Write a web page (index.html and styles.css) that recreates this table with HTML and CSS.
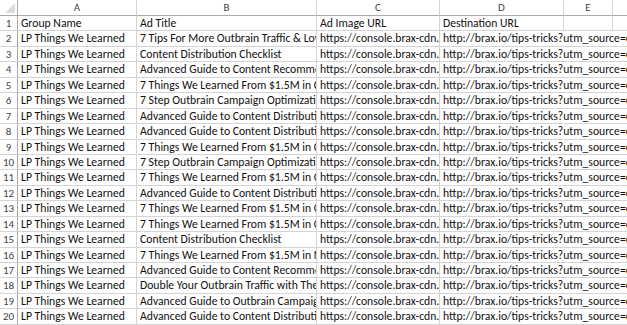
FILE: index.html
```html
<!DOCTYPE html>
<html>
<head>
<meta charset="utf-8">
<link rel="stylesheet" href="styles.css">
</head>
<body>
<div class="sheet">
  <div class="corner"><span class="tri"></span></div>
  <div class="colhead">A</div>
  <div class="colhead">B</div>
  <div class="colhead">C</div>
  <div class="colhead">D</div>
  <div class="colhead">E</div>
  <div class="colhead last"></div>

  <div class="rowhead">1</div>
  <div class="cell">Group Name</div>
  <div class="cell">Ad Title</div>
  <div class="cell">Ad Image URL</div>
  <div class="cell">Destination URL</div>
  <div class="cell"></div>
  <div class="cell last"></div>

  <div class="rowhead">2</div>
  <div class="cell">LP Things We Learned</div>
  <div class="cell">7 Tips For More Outbrain Traffic &amp; Lower CPCs</div>
  <div class="cell">https://console.brax-cdn.com/creatives/1.jpg</div>
  <div class="cell wide">http://brax.io/tips-tricks?utm_source=outbrain&amp;utm_medium=cpc</div>

  <div class="rowhead">3</div>
  <div class="cell">LP Things We Learned</div>
  <div class="cell">Content Distribution Checklist</div>
  <div class="cell">https://console.brax-cdn.com/creatives/2.jpg</div>
  <div class="cell wide">http://brax.io/tips-tricks?utm_source=outbrain&amp;utm_medium=cpc</div>

  <div class="rowhead">4</div>
  <div class="cell">LP Things We Learned</div>
  <div class="cell">Advanced Guide to Content Recommendation</div>
  <div class="cell">https://console.brax-cdn.com/creatives/3.jpg</div>
  <div class="cell wide">http://brax.io/tips-tricks?utm_source=outbrain&amp;utm_medium=cpc</div>

  <div class="rowhead">5</div>
  <div class="cell">LP Things We Learned</div>
  <div class="cell">7 Things We Learned From $1.5M in Content Marketing</div>
  <div class="cell">https://console.brax-cdn.com/creatives/4.jpg</div>
  <div class="cell wide">http://brax.io/tips-tricks?utm_source=outbrain&amp;utm_medium=cpc</div>

  <div class="rowhead">6</div>
  <div class="cell">LP Things We Learned</div>
  <div class="cell">7 Step Outbrain Campaign Optimization</div>
  <div class="cell">https://console.brax-cdn.com/creatives/5.jpg</div>
  <div class="cell wide">http://brax.io/tips-tricks?utm_source=outbrain&amp;utm_medium=cpc</div>

  <div class="rowhead">7</div>
  <div class="cell">LP Things We Learned</div>
  <div class="cell">Advanced Guide to Content Distribution</div>
  <div class="cell">https://console.brax-cdn.com/creatives/6.jpg</div>
  <div class="cell wide">http://brax.io/tips-tricks?utm_source=outbrain&amp;utm_medium=cpc</div>

  <div class="rowhead">8</div>
  <div class="cell">LP Things We Learned</div>
  <div class="cell">Advanced Guide to Content Distribution</div>
  <div class="cell">https://console.brax-cdn.com/creatives/7.jpg</div>
  <div class="cell wide">http://brax.io/tips-tricks?utm_source=outbrain&amp;utm_medium=cpc</div>

  <div class="rowhead">9</div>
  <div class="cell">LP Things We Learned</div>
  <div class="cell">7 Things We Learned From $1.5M in Content Marketing</div>
  <div class="cell">https://console.brax-cdn.com/creatives/8.jpg</div>
  <div class="cell wide">http://brax.io/tips-tricks?utm_source=outbrain&amp;utm_medium=cpc</div>

  <div class="rowhead">10</div>
  <div class="cell">LP Things We Learned</div>
  <div class="cell">7 Step Outbrain Campaign Optimization</div>
  <div class="cell">https://console.brax-cdn.com/creatives/9.jpg</div>
  <div class="cell wide">http://brax.io/tips-tricks?utm_source=outbrain&amp;utm_medium=cpc</div>

  <div class="rowhead">11</div>
  <div class="cell">LP Things We Learned</div>
  <div class="cell">7 Things We Learned From $1.5M in Outbrain Ads</div>
  <div class="cell">https://console.brax-cdn.com/creatives/10.jpg</div>
  <div class="cell wide">http://brax.io/tips-tricks?utm_source=outbrain&amp;utm_medium=cpc</div>

  <div class="rowhead">12</div>
  <div class="cell">LP Things We Learned</div>
  <div class="cell">Advanced Guide to Content Distribution</div>
  <div class="cell">https://console.brax-cdn.com/creatives/11.jpg</div>
  <div class="cell wide">http://brax.io/tips-tricks?utm_source=outbrain&amp;utm_medium=cpc</div>

  <div class="rowhead">13</div>
  <div class="cell">LP Things We Learned</div>
  <div class="cell">7 Things We Learned From $1.5M in Outbrain Ads</div>
  <div class="cell">https://console.brax-cdn.com/creatives/12.jpg</div>
  <div class="cell wide">http://brax.io/tips-tricks?utm_source=outbrain&amp;utm_medium=cpc</div>

  <div class="rowhead">14</div>
  <div class="cell">LP Things We Learned</div>
  <div class="cell">7 Things We Learned From $1.5M in Outbrain Ads</div>
  <div class="cell">https://console.brax-cdn.com/creatives/13.jpg</div>
  <div class="cell wide">http://brax.io/tips-tricks?utm_source=outbrain&amp;utm_medium=cpc</div>

  <div class="rowhead">15</div>
  <div class="cell">LP Things We Learned</div>
  <div class="cell">Content Distribution Checklist</div>
  <div class="cell">https://console.brax-cdn.com/creatives/14.jpg</div>
  <div class="cell wide">http://brax.io/tips-tricks?utm_source=outbrain&amp;utm_medium=cpc</div>

  <div class="rowhead">16</div>
  <div class="cell">LP Things We Learned</div>
  <div class="cell">7 Things We Learned From $1.5M in Native Ads</div>
  <div class="cell">https://console.brax-cdn.com/creatives/15.jpg</div>
  <div class="cell wide">http://brax.io/tips-tricks?utm_source=outbrain&amp;utm_medium=cpc</div>

  <div class="rowhead">17</div>
  <div class="cell">LP Things We Learned</div>
  <div class="cell">Advanced Guide to Content Recommendation</div>
  <div class="cell">https://console.brax-cdn.com/creatives/16.jpg</div>
  <div class="cell wide">http://brax.io/tips-tricks?utm_source=outbrain&amp;utm_medium=cpc</div>

  <div class="rowhead">18</div>
  <div class="cell">LP Things We Learned</div>
  <div class="cell">Double Your Outbrain Traffic with These Tips</div>
  <div class="cell">https://console.brax-cdn.com/creatives/17.jpg</div>
  <div class="cell wide">http://brax.io/tips-tricks?utm_source=outbrain&amp;utm_medium=cpc</div>

  <div class="rowhead">19</div>
  <div class="cell">LP Things We Learned</div>
  <div class="cell">Advanced Guide to Outbrain Campaigns</div>
  <div class="cell">https://console.brax-cdn.com/creatives/18.jpg</div>
  <div class="cell wide">http://brax.io/tips-tricks?utm_source=outbrain&amp;utm_medium=cpc</div>

  <div class="rowhead">20</div>
  <div class="cell">LP Things We Learned</div>
  <div class="cell">Advanced Guide to Content Distribution</div>
  <div class="cell">https://console.brax-cdn.com/creatives/19.jpg</div>
  <div class="cell wide">http://brax.io/tips-tricks?utm_source=outbrain&amp;utm_medium=cpc</div>
</div>
</body>
</html>
```

FILE: styles.css
```css
html, body {
  margin: 0;
  padding: 0;
  background: #fff;
}
.sheet {
  display: grid;
  grid-template-columns: 18px 119px 180px 123px 124px 49px 14px;
  grid-template-rows: 16px repeat(20, 15.45px);
  width: 627px;
  height: 325px;
  overflow: hidden;
  font-family: Carlito, Calibri, "Open Sans", sans-serif;
  font-size: 11.7px;
  color: #111;
}
.corner {
  border-right: 1px solid #ababab;
  border-bottom: 1px solid #ababab;
  position: relative;
  background: #fff;
}
.tri {
  position: absolute;
  right: 2px;
  bottom: 2px;
  width: 0;
  height: 0;
  border-left: 10px solid transparent;
  border-bottom: 10px solid #dcdcdc;
}
.colhead {
  border-right: 1px solid #d4d4d4;
  border-bottom: 1px solid #ababab;
  text-align: center;
  color: #444;
  line-height: 15px;
  font-size: 11px;
}
.rowhead {
  border-right: 1px solid #ababab;
  border-bottom: 1px solid #d4d4d4;
  text-align: center;
  color: #444;
  line-height: 15px;
  font-size: 11px;
  white-space: nowrap;
}
.cell {
  border-right: 1px solid #d4d4d4;
  border-bottom: 1px solid #d4d4d4;
  padding-left: 3px;
  line-height: 15px;
  white-space: nowrap;
  overflow: hidden;
}
.cell.wide {
  grid-column: span 3;
  border-right: none;
}
.last {
  border-right: none;
}
```
